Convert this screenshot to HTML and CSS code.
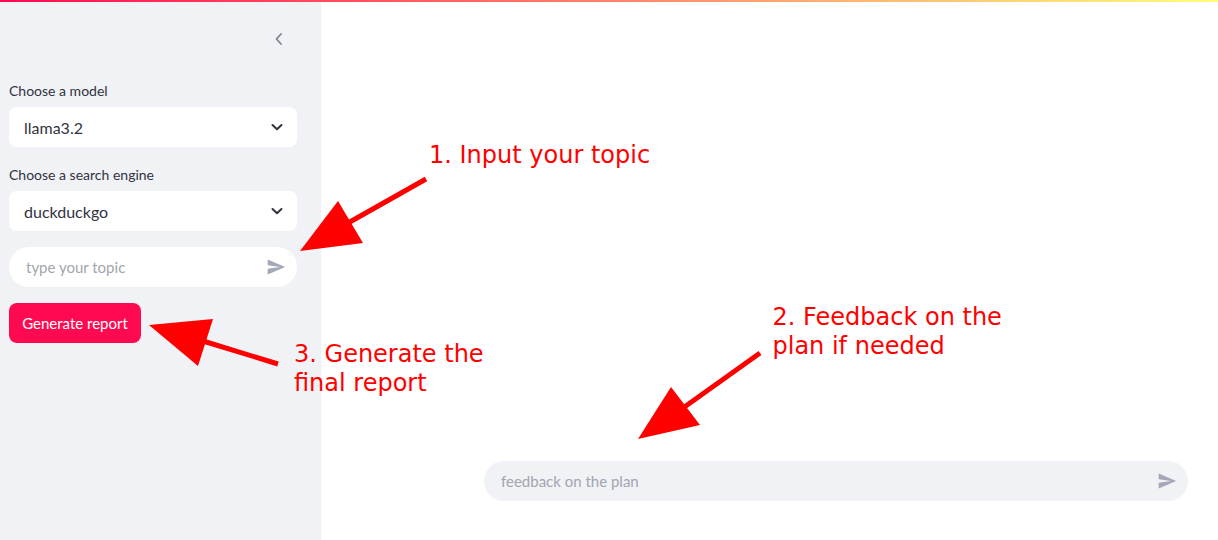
FILE: index.html
```html
<!DOCTYPE html>
<html lang="en">
<head>
<meta charset="utf-8">
<title>Report generator</title>
<link rel="stylesheet" href="styles.css">
</head>
<body>
<div class="app">
  <div class="decoration"></div>
  <aside class="sidebar">
    <div class="sidebar-header">
      <button class="collapse-btn" aria-label="Collapse sidebar">
        <svg width="16" height="16" viewBox="0 0 16 16"><path d="M10 3 L5.5 8 L10 13" fill="none" stroke="#808495" stroke-width="1.8" stroke-linecap="round" stroke-linejoin="round"/></svg>
      </button>
    </div>
    <div class="sidebar-content">
      <label class="field-label">Choose a model</label>
      <div class="select">
        <span class="select-value">llama3.2</span>
        <svg class="select-chevron" width="14" height="14" viewBox="0 0 14 14"><path d="M2.5 5 L7 9.3 L11.5 5" fill="none" stroke="#31333f" stroke-width="2" stroke-linecap="round" stroke-linejoin="round"/></svg>
      </div>
      <label class="field-label second">Choose a search engine</label>
      <div class="select">
        <span class="select-value">duckduckgo</span>
        <svg class="select-chevron" width="14" height="14" viewBox="0 0 14 14"><path d="M2.5 5 L7 9.3 L11.5 5" fill="none" stroke="#31333f" stroke-width="2" stroke-linecap="round" stroke-linejoin="round"/></svg>
      </div>
      <div class="chat-input white">
        <span class="placeholder">type your topic</span>
        <svg class="send-icon" width="20" height="20" viewBox="0 0 24 24"><path d="M2.01 21 L23 12 L2.01 3 L2 10 L17 12 L2 14 Z" fill="#a3a8b8"/></svg>
      </div>
      <button class="primary-btn">Generate report</button>
    </div>
  </aside>
  <main class="main">
    <div class="chat-input grey wide">
      <span class="placeholder">feedback on the plan</span>
      <svg class="send-icon" width="20" height="20" viewBox="0 0 24 24"><path d="M2.01 21 L23 12 L2.01 3 L2 10 L17 12 L2 14 Z" fill="#a3a8b8"/></svg>
    </div>
  </main>
  <svg class="annotations" width="1218" height="540" viewBox="0 0 1218 540">
    <g fill="#ff0000" stroke="none">
      <polygon points="300,251 338,201 363,243"/>
      <polygon points="149,325 213,319 198,366"/>
      <polygon points="638,439 671,387 700,425"/>
    </g>
    <g stroke="#ff0000" stroke-width="5" fill="none">
      <line x1="426" y1="179" x2="348" y2="223"/>
      <line x1="278" y1="364" x2="203" y2="341"/>
      <line x1="760" y1="353" x2="683" y2="408"/>
    </g>
    <g class="note">
      <text x="429" y="162.5">1. Input your topic</text>
      <text x="772.5" y="325">2. Feedback on the</text>
      <text x="772.5" y="353.8">plan if needed</text>
      <text x="294" y="362">3. Generate the</text>
      <text x="294" y="390.8">final report</text>
    </g>
  </svg>
</div>
</body>
</html>
```

FILE: styles.css
```css
* { box-sizing: border-box; }
html, body { margin: 0; padding: 0; }
body {
  font-family: Lato, "Open Sans", "Liberation Sans", sans-serif;
  color: #31333f;
  background: #ffffff;
}
.app {
  position: relative;
  display: flex;
  width: 1218px;
  height: 540px;
  overflow: hidden;
}
.decoration {
  position: absolute;
  top: 0;
  left: 0;
  right: 0;
  height: 2px;
  background: linear-gradient(90deg, #ff0a50, #fffd80);
  z-index: 3;
}
.sidebar {
  width: 321px;
  flex: 0 0 321px;
  background: #f0f2f6;
  display: flex;
  flex-direction: column;
}
.sidebar-header {
  height: 78px;
  display: flex;
  align-items: center;
  justify-content: flex-end;
  padding-right: 32px;
}
.collapse-btn {
  border: none;
  background: transparent;
  padding: 0;
  width: 20px;
  height: 20px;
  display: flex;
  align-items: center;
  justify-content: center;
}
.sidebar-content {
  padding: 3px 0 0 9px;
  width: 297px;
  display: flex;
  flex-direction: column;
}
.field-label {
  font-size: 14px;
  line-height: 20px;
  color: #31333f;
  margin-bottom: 6px;
}
.field-label.second { margin-top: 18px; }
.select {
  height: 40px;
  background: #ffffff;
  border-radius: 8px;
  display: flex;
  align-items: center;
  justify-content: space-between;
  padding: 0 13px 0 15px;
}
.select-value {
  font-size: 16px;
  color: #31333f;
}
.chat-input {
  height: 40px;
  border-radius: 20px;
  display: flex;
  align-items: center;
  justify-content: space-between;
  padding: 0 11px 0 17px;
}
.chat-input.white {
  background: #ffffff;
  margin-top: 16px;
}
.chat-input.grey {
  background: #f0f2f6;
}
.placeholder {
  font-size: 15px;
  line-height: 20px;
  margin-top: -1px;
  color: #a3a5ae;
}
.send-icon { display: block; }
.primary-btn {
  margin-top: 16px;
  align-self: flex-start;
  height: 40px;
  width: 132px;
  border: none;
  border-radius: 8px;
  background: #ff0a50;
  color: #ffffff;
  font-family: inherit;
  font-size: 15px;
  line-height: 20px;
  padding: 0 0 1px;
}
.main {
  flex: 1;
  display: flex;
  flex-direction: column;
  justify-content: flex-end;
  padding: 0 30px 39px 163px;
}
.annotations {
  position: absolute;
  top: 0;
  left: 0;
  pointer-events: none;
  z-index: 2;
}
.note text {
  font-family: "DejaVu Sans", sans-serif;
  font-size: 24px;
  fill: #ff0000;
}
```
